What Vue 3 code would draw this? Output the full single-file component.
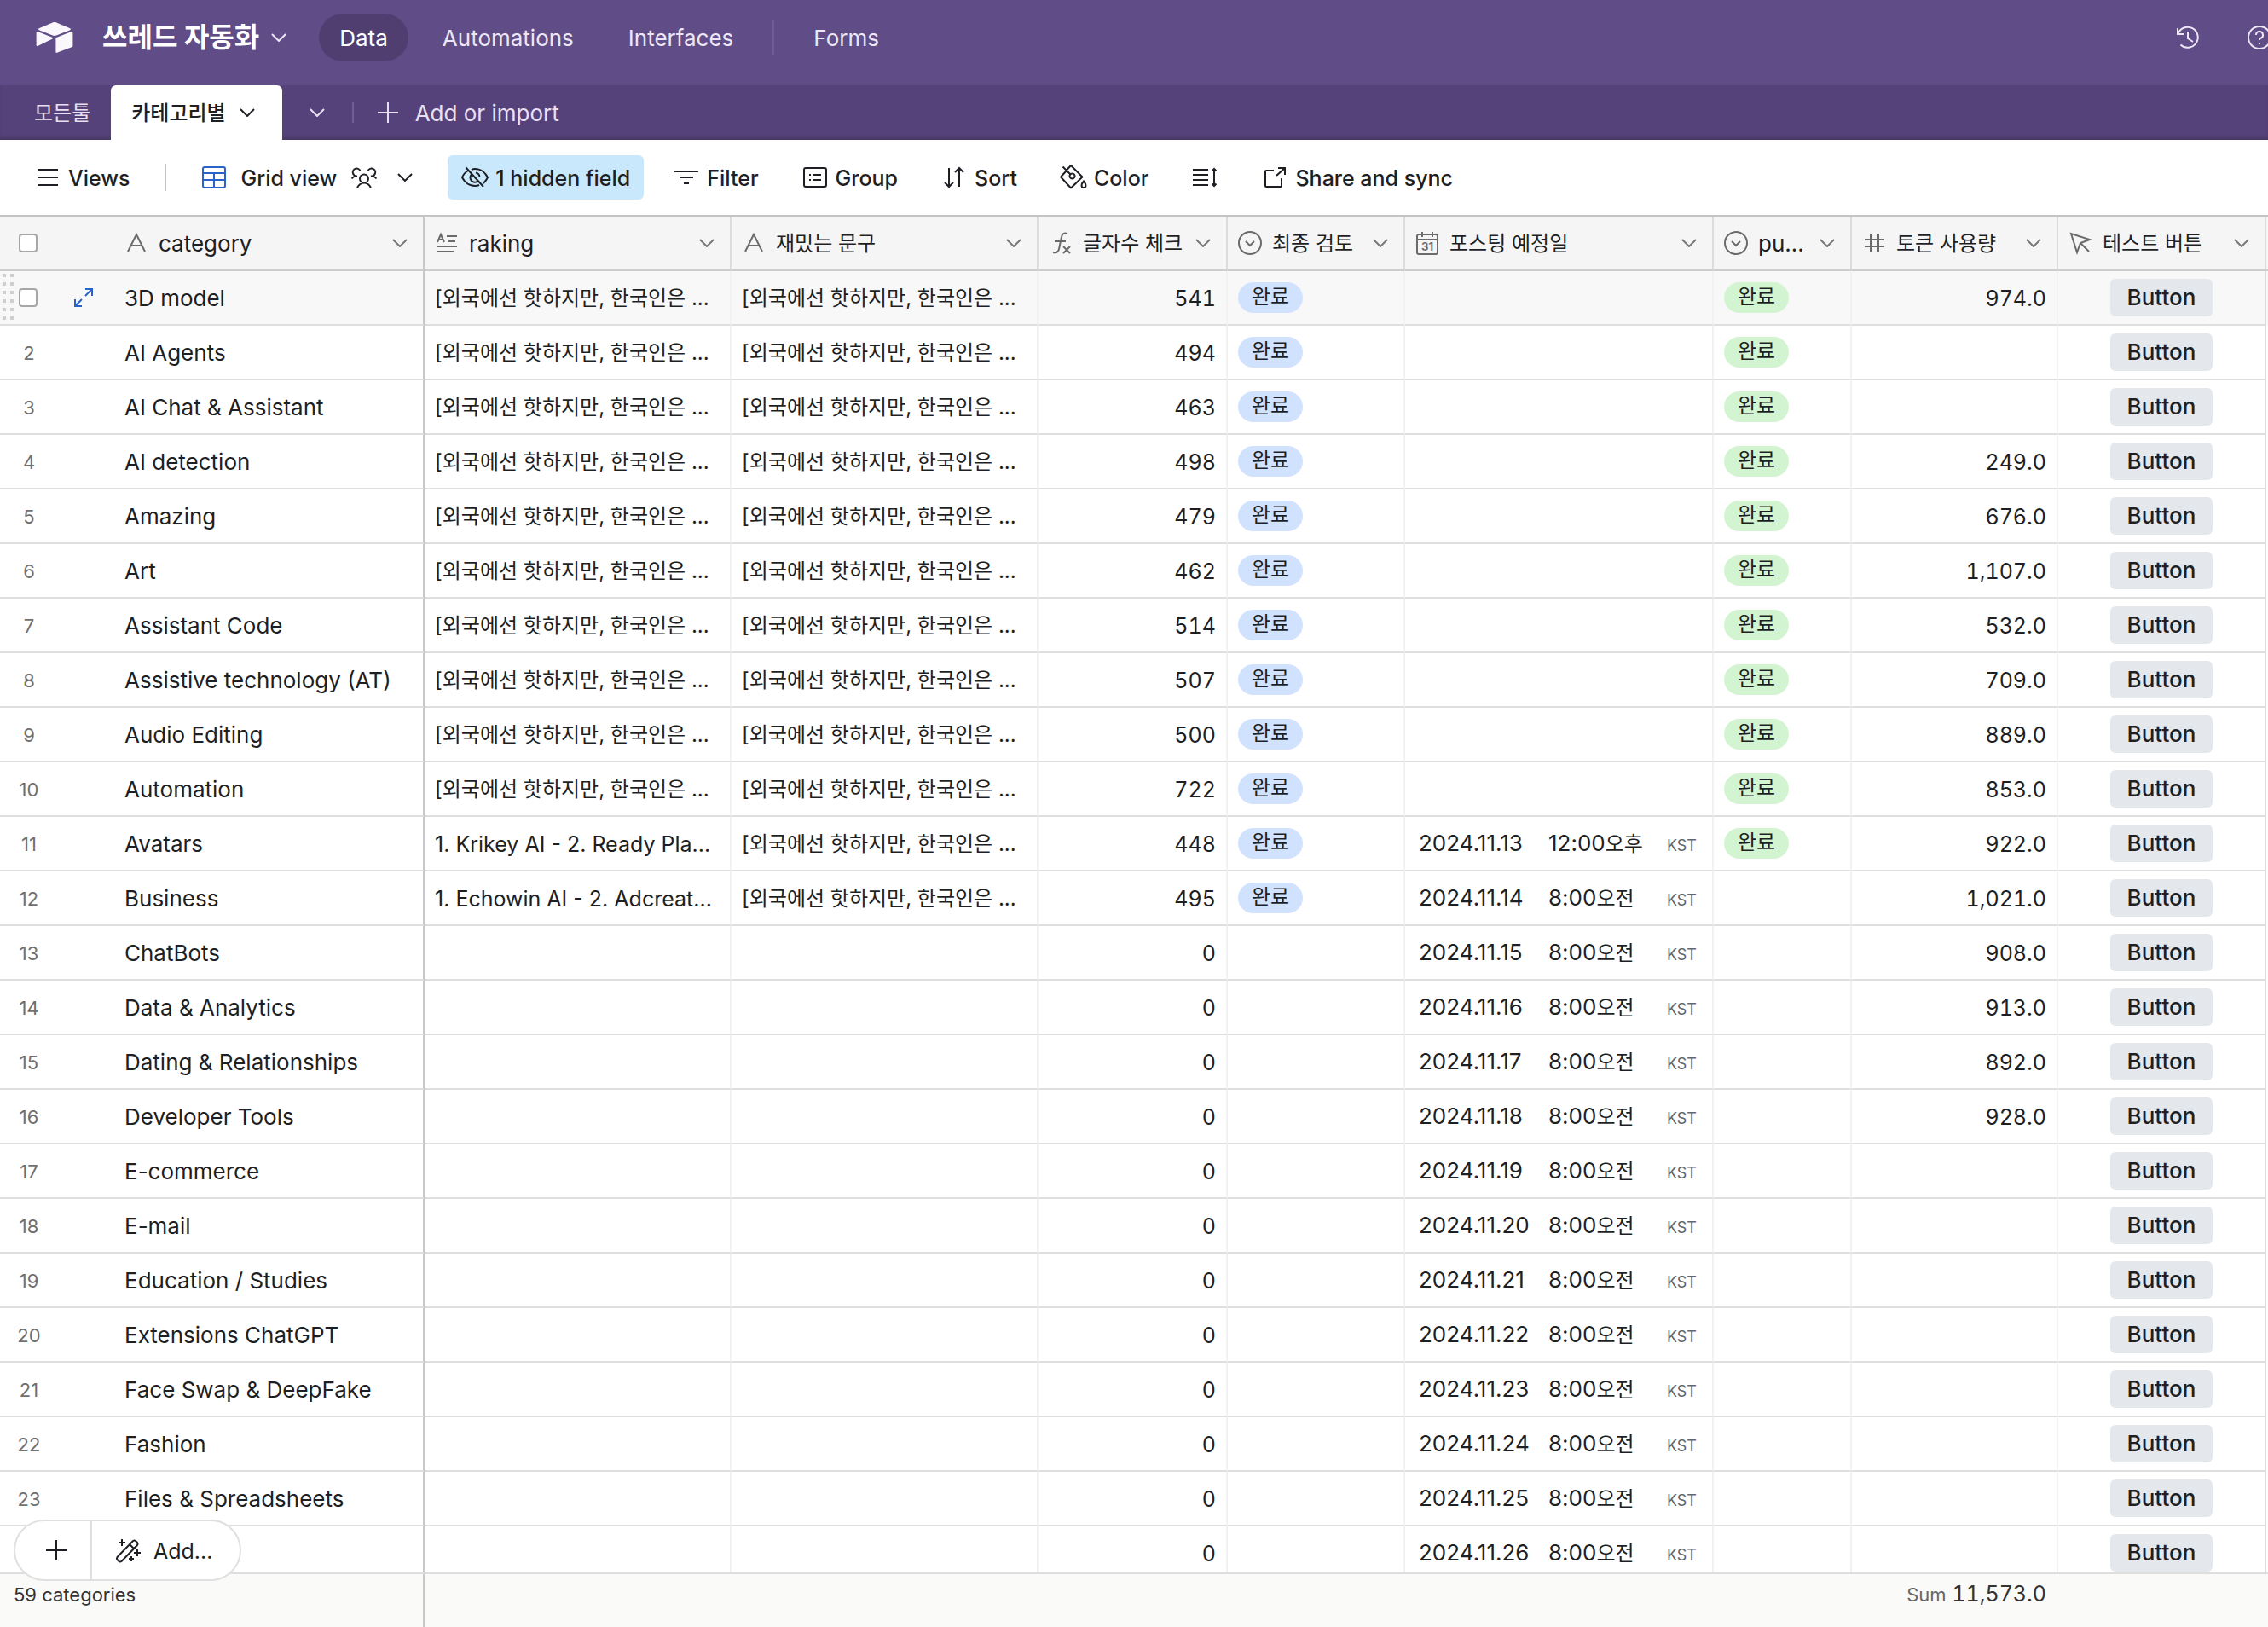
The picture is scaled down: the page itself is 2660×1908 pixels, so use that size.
<template>
  <div class="app">
    <header class="topbar">
      <svg class="logo" viewBox="11 10 177 149" fill="currentColor">
        <path d="M90.04 12.37 24.08 39.66c-3.67 1.52-3.63 6.73.06 8.19l66.24 26.27c5.82 2.3 12.3 2.3 18.12 0l66.23-26.27c3.69-1.46 3.73-6.67.06-8.19l-65.96-27.29c-6.02-2.49-12.77-2.49-18.79 0" />
        <path d="M105.31 88.46v65.62c0 3.12 3.15 5.26 6.05 4.1l73.81-28.64c1.68-.67 2.79-2.3 2.79-4.11V59.81c0-3.12-3.15-5.26-6.05-4.1l-73.81 28.64c-1.68.67-2.79 2.3-2.79 4.11" />
        <path d="m88.08 91.85-24.13 11.65-46.24 22.15c-2.93 1.42-6.67-.72-6.67-3.98V60.09c0-1.18.6-2.2 1.41-2.96.34-.34.73-.62 1.12-.84 1.11-.66 2.68-.84 4.02-.31l70.12 27.78c3.56 1.41 3.84 6.41.37 8.09" />
      </svg>
      <button class="base-name">
        <span class="base-title">쓰레드 자동화</span>
        <svg class="chevron" viewBox="0 0 18 10"><path :d="icons.chevron" /></svg>
      </button>
      <nav class="nav">
        <a href="#data" class="nav-item active">Data</a>
        <a href="#automations" class="nav-item">Automations</a>
        <a href="#interfaces" class="nav-item">Interfaces</a>
        <span class="nav-divider"></span>
        <a href="#forms" class="nav-item">Forms</a>
      </nav>
      <div class="top-actions">
        <button class="icon-btn" aria-label="History">
          <svg class="icon" viewBox="0 0 32 32"><path :d="icons.history" /></svg>
        </button>
        <button class="icon-btn" aria-label="Help">
          <svg class="icon" viewBox="0 0 32 32"><path :d="icons.help" /></svg>
        </button>
      </div>
    </header>

    <div class="tabbar">
      <button class="tab"><span class="label">모든툴</span></button>
      <button class="tab tab-active">
        <span class="label">카테고리별</span>
        <svg class="chevron" viewBox="0 0 18 10"><path :d="icons.chevron" /></svg>
      </button>
      <button class="tab-more" aria-label="All tables">
        <svg class="chevron" viewBox="0 0 18 10"><path :d="icons.chevron" /></svg>
      </button>
      <span class="tab-divider"></span>
      <button class="tab-add">
        <svg class="icon" viewBox="0 0 32 32"><path :d="icons.plus" /></svg>
        <span class="label">Add or import</span>
      </button>
    </div>

    <div class="toolbar">
      <button class="tool views">
        <svg class="icon" viewBox="0 0 32 32"><path :d="icons.menu" /></svg>
        <span class="label">Views</span>
      </button>
      <span class="tool-divider"></span>
      <button class="tool grid-view">
        <svg class="icon blue" viewBox="0 0 32 32"><path :d="icons.grid" /></svg>
        <span class="label">Grid view</span>
        <svg class="icon" viewBox="0 0 32 32"><path :d="icons.people" /></svg>
        <span class="icon chevron-box">
          <svg class="chevron" viewBox="0 0 18 10"><path :d="icons.chevron" /></svg>
        </span>
      </button>
      <button
        v-for="tool in tools"
        :key="tool.icon"
        class="tool"
        :class="{ 'tool-on': tool.on }"
        :aria-label="tool.label || 'Row height'"
      >
        <svg class="icon" viewBox="0 0 32 32"><path :d="icons[tool.icon]" /></svg>
        <span v-if="tool.label" class="label">{{ tool.label }}</span>
      </button>
    </div>

    <main class="grid">
      <table>
        <colgroup>
          <col class="col-primary" />
          <col v-for="col in columns" :key="col.key" :class="'col-' + col.key" />
          <col />
        </colgroup>
        <thead>
          <tr>
            <th class="primary">
              <div class="head">
                <span class="gutter"><input type="checkbox" aria-label="Select all" /></span>
                <svg class="type-icon" viewBox="0 0 28 28"><path :d="icons.text" /></svg>
                <span class="head-label label">category</span>
                <svg class="chevron" viewBox="0 0 18 10"><path :d="icons.chevron" /></svg>
              </div>
            </th>
            <th v-for="col in columns" :key="col.key">
              <div class="head">
                <svg class="type-icon" viewBox="0 0 28 28">
                  <path :d="icons[col.icon]" />
                  <text v-if="col.icon === 'date'" x="14" y="23" text-anchor="middle">31</text>
                </svg>
                <span class="head-label label" :class="{ ko: col.ko }">{{ col.label }}</span>
                <svg class="chevron" viewBox="0 0 18 10"><path :d="icons.chevron" /></svg>
              </div>
            </th>
            <th class="filler"></th>
          </tr>
        </thead>
        <tbody>
          <tr v-for="(row, i) in rows" :key="i" :class="{ hovered: i === 0 }">
            <td class="primary">
              <div class="primary-cell">
                <span v-if="i === 0" class="gutter">
                  <svg class="drag" viewBox="0 0 14 56"><path :d="icons.drag" /></svg>
                  <input type="checkbox" aria-label="Select 3D model" />
                  <svg class="expand" viewBox="0 0 24 24"><path :d="icons.expand" /></svg>
                </span>
                <span v-else class="row-number label">{{ row.name ? i + 1 : '' }}</span>
                <span class="label">{{ row.name }}</span>
              </div>
            </td>
            <td class="text" :class="row.raking.startsWith('[') ? 'ko' : 'long'">{{ row.raking }}</td>
            <td class="text ko">{{ row.phrase }}</td>
            <td class="text number">{{ row.count }}</td>
            <td><span v-if="row.review" class="chip chip-blue">완료</span></td>
            <td class="text">
              <div v-if="row.date" class="datetime">
                <span class="date">{{ row.date }}</span>
                <span>{{ row.time }}<span class="ko">{{ row.half }}</span></span>
                <span class="zone">KST</span>
              </div>
            </td>
            <td><span v-if="row.published" class="chip chip-green">완료</span></td>
            <td class="text number">{{ row.tokens }}</td>
            <td class="action"><button class="cell-btn">Button</button></td>
            <td class="filler"></td>
          </tr>
        </tbody>
      </table>
    </main>

    <footer class="summary">
      <div class="summary-count">59 categories</div>
      <div class="summary-sum"><span class="sum-label">Sum</span> 11,573.0</div>
      <div class="add-pill">
        <button class="add-row" aria-label="Add record">
          <svg class="icon" viewBox="0 0 32 32"><path :d="icons.plus" /></svg>
        </button>
        <button class="add-magic">
          <svg class="icon" viewBox="0 0 32 32"><path :d="icons.wand" /></svg>
          <span class="label">Add...</span>
        </button>
      </div>
    </footer>
  </div>
</template>

<script setup>
import { ref } from 'vue'

const icons = {
  chevron: 'M1 1l8 8 8-8',
  plus: 'M16 4v24M4 16h24',
  menu: 'M4 7h24M4 16h24M4 25h24',
  history: 'M4 5v7h7M4.500 11.500A12 12 0 1 1 7.500 24.500M16 9v8l6 4',
  help: 'M16 3a13 13 0 1 0 0 26a13 13 0 1 0 0-26M12 13a4 4 0 1 1 5.500 3.700q-1.500 .8-1.500 2.300M16 22.500v1.500',
  grid: 'M5 4h22a2 2 0 0 1 2 2v20a2 2 0 0 1-2 2H5a2 2 0 0 1-2-2V6a2 2 0 0 1 2-2zM3 11h26M3 19h26M16 11v17',
  people: 'M16 12.500a5 5 0 1 0 0 10a5 5 0 1 0 0-10M8 28q3-5.500 8-5.500t8 5.500M11.500 8.500A4.500 4.500 0 1 0 8 14.500H6Q3.500 15 1.500 17.500M20.500 8.500A4.500 4.500 0 1 1 24 14.500h2q2.500 .5 4.500 3',
  hidden: 'M5.500 4.500L26 27M12 7q2-1 4-1c8 0 13 6 15 10q-2 4-5 7M21 25q-2 1-5 1C8 26 3 20 1 16q2-5 7-8M12.500 12a5.500 5.500 0 0 0 7 8.500M17 10.500a5.500 5.500 0 0 1 4.500 5',
  filter: 'M2 9h28M8 16h16M13 23h6',
  group: 'M5 5h22a2 2 0 0 1 2 2v18a2 2 0 0 1-2 2H5a2 2 0 0 1-2-2V7a2 2 0 0 1 2-2zM9 13h2M14 13h9M9 19h2M14 19h9',
  sort: 'M10 5v22M5 22l5 5 5-5M22 27V5M17 10l5-5 5 5',
  color: 'M3.500 3.500L12.500 12.500M8 8L1.500 15q-.5.5 0 1L12.500 28q.5.5 1 0L26 16q.5-.5 0-1L13.500 2.500q-.5-.5-1 0L8 7.500M14.500 11.500a3 3 0 1 0 .1 0M28 20.500q2.500 3 2.500 5a2.500 2.500 0 0 1-5 0q0-2 2.500-5z',
  height: 'M2 7h18M2 13h18M2 19h18M2 25h18M27 6v20M24.500 8.500L27 6l2.500 2.500M24.500 23.500L27 26l2.500-2.500',
  share: 'M15 8H6a1 1 0 0 0-1 1v17a1 1 0 0 0 1 1h17a1 1 0 0 0 1-1v-9M18 14L28 5M20 5h8v8',
  text: 'M4 24L14 4l10 20M8 17h12',
  longText: 'M3 13L7 4l4 9M4.500 10h5M14 6h12M16 12h8M2 18h24M2 24h20',
  formula: 'M22 3q-6-2-7 4l-3 14q-1 5-7 4M7 12h13M17 18l8 8M25 18l-8 8',
  select: 'M14 1a13 13 0 1 0 0 26a13 13 0 1 0 0-26M9 12l5 5 5-5',
  date: 'M4 4h20a2 2 0 0 1 2 2v19a2 2 0 0 1-2 2H4a2 2 0 0 1-2-2V6a2 2 0 0 1 2-2zM2 10h24M8 1v6M20 1v6',
  number: 'M10 3v22M19 3v22M3 10h23M3 18h23',
  button: 'M3 3l7 22 4-11 11-4zM14 14l10 10',
  expand: 'M14 2h8v8M22 2l-8 8M10 22H2v-8M2 22l8-8',
  wand: 'M3.500 24L22 5q1.500-1 3 0l2 2q1 1.500 0 3L8.500 29q-1.500 1-3 0l-2-2q-1-1.500 0-3zM18 9l5 5M9 3v8M5 7h8M27 15v8M23 19h8M20 23v6M17 26h6',
  drag: 'M2 2v.1M2 12v.1M2 22v.1M2 32v.1M2 42v.1M2 52v.1M11 2v.1M11 12v.1M11 22v.1M11 32v.1M11 42v.1M11 52v.1'
}

const tools = ref([
  { icon: 'hidden', label: '1 hidden field', on: true },
  { icon: 'filter', label: 'Filter' },
  { icon: 'group', label: 'Group' },
  { icon: 'sort', label: 'Sort' },
  { icon: 'color', label: 'Color' },
  { icon: 'height', label: '' },
  { icon: 'share', label: 'Share and sync' }
])

const columns = ref([
  { key: 'raking', icon: 'longText', label: 'raking' },
  { key: 'phrase', icon: 'text', label: '재밌는 문구', ko: true },
  { key: 'count', icon: 'formula', label: '글자수 체크', ko: true },
  { key: 'review', icon: 'select', label: '최종 검토', ko: true },
  { key: 'date', icon: 'date', label: '포스팅 예정일', ko: true },
  { key: 'published', icon: 'select', label: 'pu...' },
  { key: 'tokens', icon: 'number', label: '토큰 사용량', ko: true },
  { key: 'action', icon: 'button', label: '테스트 버튼', ko: true }
])

const intro = '[외국에선 핫하지만, 한국인은 ...'

// name, character count, token usage
const records = [
  ['3D model', 541, '974.0'],
  ['AI Agents', 494, ''],
  ['AI Chat & Assistant', 463, ''],
  ['AI detection', 498, '249.0'],
  ['Amazing', 479, '676.0'],
  ['Art', 462, '1,107.0'],
  ['Assistant Code', 514, '532.0'],
  ['Assistive technology (AT)', 507, '709.0'],
  ['Audio Editing', 500, '889.0'],
  ['Automation', 722, '853.0'],
  ['Avatars', 448, '922.0'],
  ['Business', 495, '1,021.0'],
  ['ChatBots', 0, '908.0'],
  ['Data & Analytics', 0, '913.0'],
  ['Dating & Relationships', 0, '892.0'],
  ['Developer Tools', 0, '928.0'],
  ['E-commerce', 0, ''],
  ['E-mail', 0, ''],
  ['Education / Studies', 0, ''],
  ['Extensions ChatGPT', 0, ''],
  ['Face Swap & DeepFake', 0, ''],
  ['Fashion', 0, ''],
  ['Files & Spreadsheets', 0, ''],
  ['', 0, '']
]

const ranking = {
  10: '1. Krikey AI - 2. Ready Pla...',
  11: '1. Echowin AI - 2. Adcreat...'
}

const rows = ref(
  records.map(([name, count, tokens], i) => ({
    name,
    count,
    tokens,
    raking: ranking[i] || (i < 10 ? intro : ''),
    phrase: i < 12 ? intro : '',
    review: i < 12,
    published: i < 11,
    // scheduled posts start on Nov 13, one per day
    date: i >= 10 ? `2024.11.${i + 3}` : '',
    time: i === 10 ? '12:00' : '8:00',
    half: i === 10 ? '오후' : '오전'
  }))
)
</script>

<style>
body {
  margin: 0;
}
</style>

<style scoped>
.app {
  display: flex;
  flex-direction: column;
  height: 100vh;
  overflow: hidden;
  background: #fff;
  color: #1d1f25;
  font-family: Inter, "Noto Sans CJK KR", sans-serif;
  font-size: 26px;
  line-height: 32px;
}

button {
  display: flex;
  align-items: center;
  padding: 0;
  border: none;
  background: none;
  color: inherit;
  font: inherit;
  white-space: nowrap;
  cursor: pointer;
}

svg {
  flex: none;
}

.icon,
.chevron,
.type-icon,
.expand {
  fill: none;
  stroke: currentColor;
  stroke-width: 2;
}

.icon {
  width: 32px;
  height: 32px;
}

.chevron {
  width: 18px;
  height: 10px;
}

.chevron-box {
  display: flex;
  align-items: center;
  justify-content: center;
}

.label {
  padding-top: 2px;
}

.ko {
  font-size: 24px;
}

/* top bar */
.topbar {
  display: flex;
  align-items: center;
  flex: none;
  height: 88px;
  padding: 0 0 12px 42px;
  background: #604c87;
  color: #ece6f5;
}

.logo {
  width: 44px;
  height: 36px;
  color: #faf7fd;
}

.base-name {
  gap: 14px;
  margin-left: 34px;
}

.base-title {
  color: #fff;
  font-size: 32px;
  font-weight: 700;
}

.nav {
  display: flex;
  align-items: center;
  gap: 16px;
  margin-left: 38px;
}

.nav-item {
  padding: 13px 24px 11px;
  border-radius: 28px;
  color: inherit;
  text-decoration: none;
}

.nav-item.active {
  background: #503e71;
  color: #fff;
}

.nav-divider {
  width: 2px;
  height: 40px;
  margin: 0 6px;
  background: #705d95;
}

.top-actions {
  display: flex;
  gap: 52px;
  margin-left: auto;
  margin-right: -6px;
}

/* tables */
.tabbar {
  display: flex;
  align-items: center;
  flex: none;
  height: 64px;
  padding-left: 16px;
  background: #56427a;
  box-shadow: inset 0 -4px 4px -2px #46345f;
  color: #e8e0f2;
}

.tab {
  height: 64px;
  padding: 0 24px;
  font-size: 24px;
}

.tab-active {
  gap: 16px;
  padding-right: 32px;
  border-radius: 6px 6px 0 0;
  background: #fff;
  color: #1d1f25;
  font-weight: 500;
}

.tab-more {
  padding: 0 32px;
}

.tab-divider {
  width: 2px;
  height: 24px;
  background: #705d95;
}

.tab-add {
  gap: 16px;
  margin-left: 24px;
}

/* toolbar */
.toolbar {
  display: flex;
  align-items: center;
  flex: none;
  gap: 18px;
  height: 88px;
  padding-left: 24px;
  border-bottom: 2px solid #c4c4c4;
  font-size: 25px;
}

.tool {
  gap: 8px;
  height: 52px;
  padding: 0 16px;
  border-radius: 6px;
  font-weight: 500;
}

.tool-on {
  background: #c9e8fb;
}

.tool-divider {
  width: 2px;
  height: 32px;
  margin: 0 6px;
  background: #c4c4c4;
}

.grid-view {
  gap: 16px;
}

.blue {
  color: #2b62c9;
}

/* grid */
.grid {
  flex: 1;
  min-height: 0;
  overflow: hidden;
}

table {
  width: 100%;
  border-collapse: separate;
  border-spacing: 0;
  table-layout: fixed;
}

.col-primary { width: 498px; }
.col-raking { width: 360px; }
.col-phrase { width: 360px; }
.col-count { width: 222px; }
.col-review { width: 208px; }
.col-date { width: 362px; }
.col-published { width: 162px; }
.col-tokens { width: 242px; }
.col-action { width: 244px; }

th,
td {
  box-sizing: border-box;
  height: 64px;
  padding: 0 12px;
  border-bottom: 2px solid #dedede;
  border-right: 2px solid #f2f2f2;
  overflow: hidden;
  text-align: left;
  white-space: nowrap;
}

td.text {
  padding-top: 2px;
}

.long,
.number {
  font-size: 25px;
}

th {
  padding-right: 18px;
  border-bottom-color: #cdcdcd;
  border-right-color: #dcdcdc;
  background: #f5f5f5;
  font-weight: 400;
}

th.primary,
td.primary {
  padding-left: 0;
  border-right-color: #c8c8c8;
}

td.action {
  border-right-color: #dcdcdc;
}

.filler,
td.filler {
  padding: 0;
  border-right: none;
}

td.filler {
  border-bottom: none;
}

.hovered td {
  background: #f8f8f8;
}

.head {
  display: flex;
  align-items: center;
}

.head-label {
  flex: 1;
  margin-left: 12px;
}

.type-icon {
  width: 28px;
  height: 28px;
  color: #6b6b6b;
}

.type-icon text {
  fill: currentColor;
  stroke: none;
  font-size: 13px;
  font-weight: 700;
}

.head .chevron {
  color: #777;
}

.primary-cell {
  display: flex;
  align-items: center;
}

.gutter {
  display: flex;
  align-items: center;
  flex: none;
  box-sizing: border-box;
  width: 146px;
}

th .gutter {
  padding-left: 22px;
}

.row-number {
  flex: none;
  width: 68px;
  margin-right: 78px;
  color: #6f6f6f;
  font-size: 22px;
  text-align: center;
}

.drag {
  width: 14px;
  height: 56px;
  margin: 0 5px 0 3px;
  stroke: #cfcfcf;
  stroke-width: 4;
  stroke-linecap: square;
}

.expand {
  width: 24px;
  height: 24px;
  margin-left: 42px;
  color: #2b62c9;
}

input[type="checkbox"] {
  appearance: none;
  box-sizing: border-box;
  width: 22px;
  height: 22px;
  margin: 0;
  border: 2px solid #a6a6a6;
  border-radius: 4px;
  background: #fff;
}

.number {
  text-align: right;
  font-variant-numeric: tabular-nums;
}

.chip {
  display: block;
  box-sizing: border-box;
  width: max-content;
  height: 36px;
  padding: 0 16px;
  border-radius: 18px;
  font-size: 24px;
  line-height: 34px;
}

.chip-blue {
  background: #d1e2ff;
}

.chip-green {
  background: #d3f4d1;
}

.datetime {
  display: flex;
  align-items: baseline;
  padding: 0 6px 0 4px;
}

.date {
  width: 152px;
}

.zone {
  margin-left: auto;
  color: #61666e;
  font-size: 18px;
}

.cell-btn {
  height: 44px;
  margin: 0 auto;
  padding: 0 20px;
  border-radius: 6px;
  background: #e4e7eb;
  font-weight: 500;
}

/* summary bar */
.summary {
  position: relative;
  display: grid;
  grid-template-columns: 498px 1902px;
  flex: none;
  height: 62px;
  border-top: 2px solid #dedede;
  background: #fafaf9;
  color: #333;
}

.summary-count {
  box-sizing: border-box;
  padding: 8px 16px;
  border-right: 2px solid #c8c8c8;
  font-size: 22px;
}

.summary-sum {
  padding-top: 7px;
  font-size: 25px;
  text-align: right;
  font-variant-numeric: tabular-nums;
}

.sum-label {
  color: #666;
  font-size: 22px;
}

/* floating pill over the last rows */
.add-pill {
  position: absolute;
  top: -64px;
  left: 16px;
  display: flex;
  box-sizing: border-box;
  height: 72px;
  border: 2px solid #e0e0e0;
  border-radius: 36px;
  background: #fff;
  color: #1d1f25;
  font-size: 25px;
}

.add-row {
  padding: 0 24px 0 32px;
  border-right: 2px solid #e0e0e0;
}

.add-magic {
  gap: 14px;
  padding: 0 32px 0 26px;
}
</style>
